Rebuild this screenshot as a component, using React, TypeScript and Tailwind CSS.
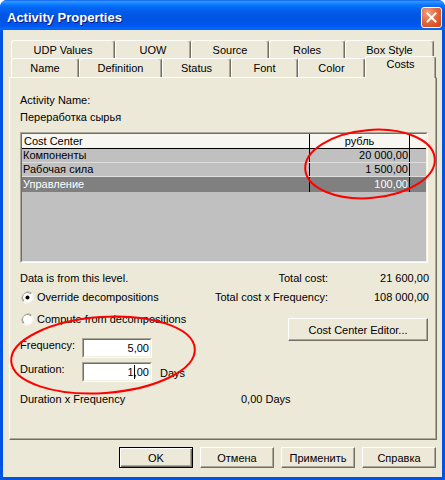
import React from "react";

const FONT = "font-['Liberation_Sans','Arial',sans-serif]";

function Radio({ checked }: { checked?: boolean }) {
  return (
    <svg width="13" height="13" viewBox="0 0 13 13" className="shrink-0">
      <path d="M2.3 10.7 A6 6 0 0 1 10.7 2.3" fill="none" stroke="#aca899" strokeWidth="1" />
      <path d="M10.7 2.3 A6 6 0 0 1 2.3 10.7" fill="none" stroke="#ffffff" strokeWidth="1" />
      <path d="M3 10 A5 5 0 0 1 10 3" fill="none" stroke="#716f64" strokeWidth="1" />
      <path d="M10 3 A5 5 0 0 1 3 10" fill="none" stroke="#f1efe2" strokeWidth="1" />
      <circle cx="6.5" cy="6.5" r="4.5" fill="#ffffff" />
      {checked && <circle cx="6.5" cy="6.5" r="2" fill="#000000" />}
    </svg>
  );
}

function Tab({ label, className }: { label: string; className: string }) {
  return (
    <div
      className={
        "h-full flex items-center justify-center bg-[#ece9d8] border-l border-t border-white border-r border-r-[#716f64] rounded-t-[3px] shadow-[inset_-1px_0_#aca899] " +
        className
      }
    >
      {label}
    </div>
  );
}

function Btn({ label, def }: { label: string; def?: boolean }) {
  return def ? (
    <div className="w-[74px] h-[21px] bg-[#ece9d8] border border-black shadow-[inset_1px_1px_#ffffff,inset_-1px_-1px_#716f64,inset_-2px_-2px_#aca899] flex items-center justify-center">
      {label}
    </div>
  ) : (
    <div className="w-[74px] h-[21px] bg-[#ece9d8] border border-t-white border-l-white border-b-[#716f64] border-r-[#716f64] shadow-[inset_-1px_-1px_#aca899] flex items-center justify-center">
      {label}
    </div>
  );
}

export default function App() {
  return (
    <div className={"relative w-[445px] h-[480px] bg-white text-[11px] leading-[14px] text-black " + FONT}>
      <div className="w-[445px] h-[480px] flex flex-col bg-[#0054e3] rounded-t-[7px] overflow-hidden">
        {/* Title bar */}
        <div className="h-[30px] shrink-0 flex items-start justify-between pl-[7px] pr-[3px] bg-[linear-gradient(to_bottom,#0058ee_0%,#3a93ff_4%,#288eff_8%,#127dff_14%,#036ffc_20%,#0262ee_32%,#0057e5_48%,#0054e3_62%,#0055eb_80%,#005bf5_90%,#026afe_95%,#0062ef_100%)]">
          <span className="text-white font-bold text-[13px] leading-[16px] [text-shadow:1px_1px_#0a1883] mt-[10px]">
            Activity Properties
          </span>
          <div className="w-[21px] h-[21px] mt-[7px] rounded-[3px] border border-white bg-[radial-gradient(circle_at_30%_25%,#f2a184_0%,#e36a3f_45%,#cc4014_100%)] flex items-center justify-center">
            <svg width="11" height="11" viewBox="0 0 11 11">
              <path d="M1.5 1.5 L9.5 9.5 M9.5 1.5 L1.5 9.5" stroke="#ffffff" strokeWidth="2" strokeLinecap="square" />
            </svg>
          </div>
        </div>

        {/* Body */}
        <div className="flex-1 mx-[3px] mb-[3px] bg-[#ece9d8] flex flex-col pt-[10px]">
          {/* Tabs row 1 */}
          <div className="flex h-[18px] ml-[8px]">
            <Tab label="UDP Values" className="w-[104px]" />
            <Tab label="UOW" className="w-[76px]" />
            <Tab label="Source" className="w-[78px]" />
            <Tab label="Roles" className="w-[76px]" />
            <Tab label="Box Style" className="w-[89px]" />
          </div>
          {/* Tabs row 2 */}
          <div className="flex items-end h-[19px] ml-[8px]">
            <Tab label="Name" className="w-[68px]" />
            <Tab label="Definition" className="w-[83px]" />
            <Tab label="Status" className="w-[69px]" />
            <Tab label="Font" className="w-[67px]" />
            <Tab label="Color" className="w-[67px]" />
            <div className="relative z-10 w-[71px] h-[22px] -mb-px flex items-start justify-center bg-[#ece9d8] border-l border-t border-white border-r border-r-[#716f64] rounded-t-[3px] shadow-[inset_-1px_0_#aca899]">
              Costs
            </div>
          </div>

          {/* Panel */}
          <div className="ml-[6px] w-[428px] h-[363px] border-l border-t border-white border-r border-b border-r-[#716f64] border-b-[#716f64] shadow-[inset_-1px_-1px_#aca899] flex flex-col pl-[10px] pr-[8px] pt-[15px]">
            <div>Activity Name:</div>
            <div className="mt-[3px]">Переработка сырья</div>

            {/* Grid */}
            <div className="mt-[8px] h-[131px] border border-t-[#aca899] border-l-[#aca899] border-b-white border-r-white flex">
              <div className="flex-1 border border-t-[#716f64] border-l-[#716f64] border-b-[#f1efe2] border-r-[#f1efe2] bg-[#c0c0c0] flex flex-col">
                <div className="h-[15px] flex bg-[#f7f6f1] border-b border-black">
                  <div className="w-[288px] border-r border-black pl-[2px] leading-[14px]">Cost Center</div>
                  <div className="w-[100px] border-r border-black text-center leading-[14px]">рубль</div>
                  <div className="flex-1" />
                </div>
                <div className="h-[14px] flex border-b border-[#dedede]">
                  <div className="w-[288px] border-r border-black pl-[1px] leading-[13px]">Компоненты</div>
                  <div className="w-[100px] border-r border-black text-right pr-[1px] leading-[13px]">20 000,00</div>
                  <div className="flex-1" />
                </div>
                <div className="h-[14px] flex border-b border-[#dedede]">
                  <div className="w-[288px] border-r border-black pl-[1px] leading-[13px]">Рабочая сила</div>
                  <div className="w-[100px] border-r border-black text-right pr-[1px] leading-[13px]">1 500,00</div>
                  <div className="flex-1" />
                </div>
                <div className="h-[15px] flex bg-[#808080] text-white">
                  <div className="w-[288px] border-r border-black pl-[1px] leading-[15px]">Управление</div>
                  <div className="w-[100px] border-r border-black text-right pr-[1px] leading-[15px]">100,00</div>
                  <div className="flex-1" />
                </div>
              </div>
            </div>

            {/* Totals */}
            <div className="mt-[8px] flex">
              <div className="flex-1">Data is from this level.</div>
              <div className="w-[130px] text-right">Total cost:</div>
              <div className="w-[101px] text-right -mr-px">21 600,00</div>
            </div>
            <div className="mt-[5px] flex">
              <div className="flex-1 flex items-center pl-px gap-[3px]">
                <Radio checked />
                <span>Override decompositions</span>
              </div>
              <div className="w-[130px] text-right">Total cost x Frequency:</div>
              <div className="w-[101px] text-right -mr-px">108 000,00</div>
            </div>

            <div className="mt-[8px] flex">
              <div className="flex-1 flex flex-col">
                <div className="flex items-center pl-px gap-[3px]">
                  <Radio />
                  <span>Compute from decompositions</span>
                </div>
                <div className="mt-[12px] flex items-start">
                  <div className="w-[62px]">Frequency:</div>
                  <div className="w-[70px] h-[20px] bg-white border border-t-[#aca899] border-l-[#aca899] border-b-white border-r-white flex">
                    <div className="flex-1 border border-t-[#716f64] border-l-[#716f64] border-b-[#f1efe2] border-r-[#f1efe2] text-right pr-[1px] leading-[16px]">
                      5,00
                    </div>
                  </div>
                </div>
                <div className="mt-[4px] flex items-start">
                  <div className="w-[62px]">Duration:</div>
                  <div className="w-[70px] h-[20px] bg-white border border-t-[#aca899] border-l-[#aca899] border-b-white border-r-white flex">
                    <div className="flex-1 border border-t-[#716f64] border-l-[#716f64] border-b-[#f1efe2] border-r-[#f1efe2] text-right pr-[1px] leading-[16px]">
                      1<span className="relative inline-block">,<span className="absolute left-0 top-[1px] w-px h-[14px] bg-black" /></span>00
                    </div>
                  </div>
                  <div className="ml-[8px] mt-[4px]">Days</div>
                </div>
              </div>
              <div className="w-[140px] mt-[6px]">
                <div className="h-[23px] bg-[#ece9d8] border border-t-white border-l-white border-b-[#716f64] border-r-[#716f64] shadow-[inset_-1px_-1px_#aca899] flex items-center justify-center">
                  Cost Center Editor...
                </div>
              </div>
            </div>

            <div className="mt-[10px] flex">
              <div className="w-[221px]">Duration x Frequency</div>
              <div>0,00 Days</div>
            </div>
          </div>

          {/* Buttons */}
          <div className="mt-[7px] flex justify-end gap-[7px] pr-[6px]">
            <Btn label="OK" def />
            <Btn label="Отмена" />
            <Btn label="Применить" />
            <Btn label="Справка" />
          </div>
        </div>
      </div>

      {/* Red annotation ellipses */}
      <svg className="absolute inset-0 pointer-events-none" width="445" height="480" viewBox="0 0 445 480">
        <ellipse cx="370" cy="164" rx="65" ry="34" transform="rotate(-5 370 164)" fill="none" stroke="#ff0000" strokeWidth="2" />
        <ellipse cx="103" cy="355" rx="92" ry="38" transform="rotate(-4 103 355)" fill="none" stroke="#ff0000" strokeWidth="2" />
      </svg>
    </div>
  );
}
